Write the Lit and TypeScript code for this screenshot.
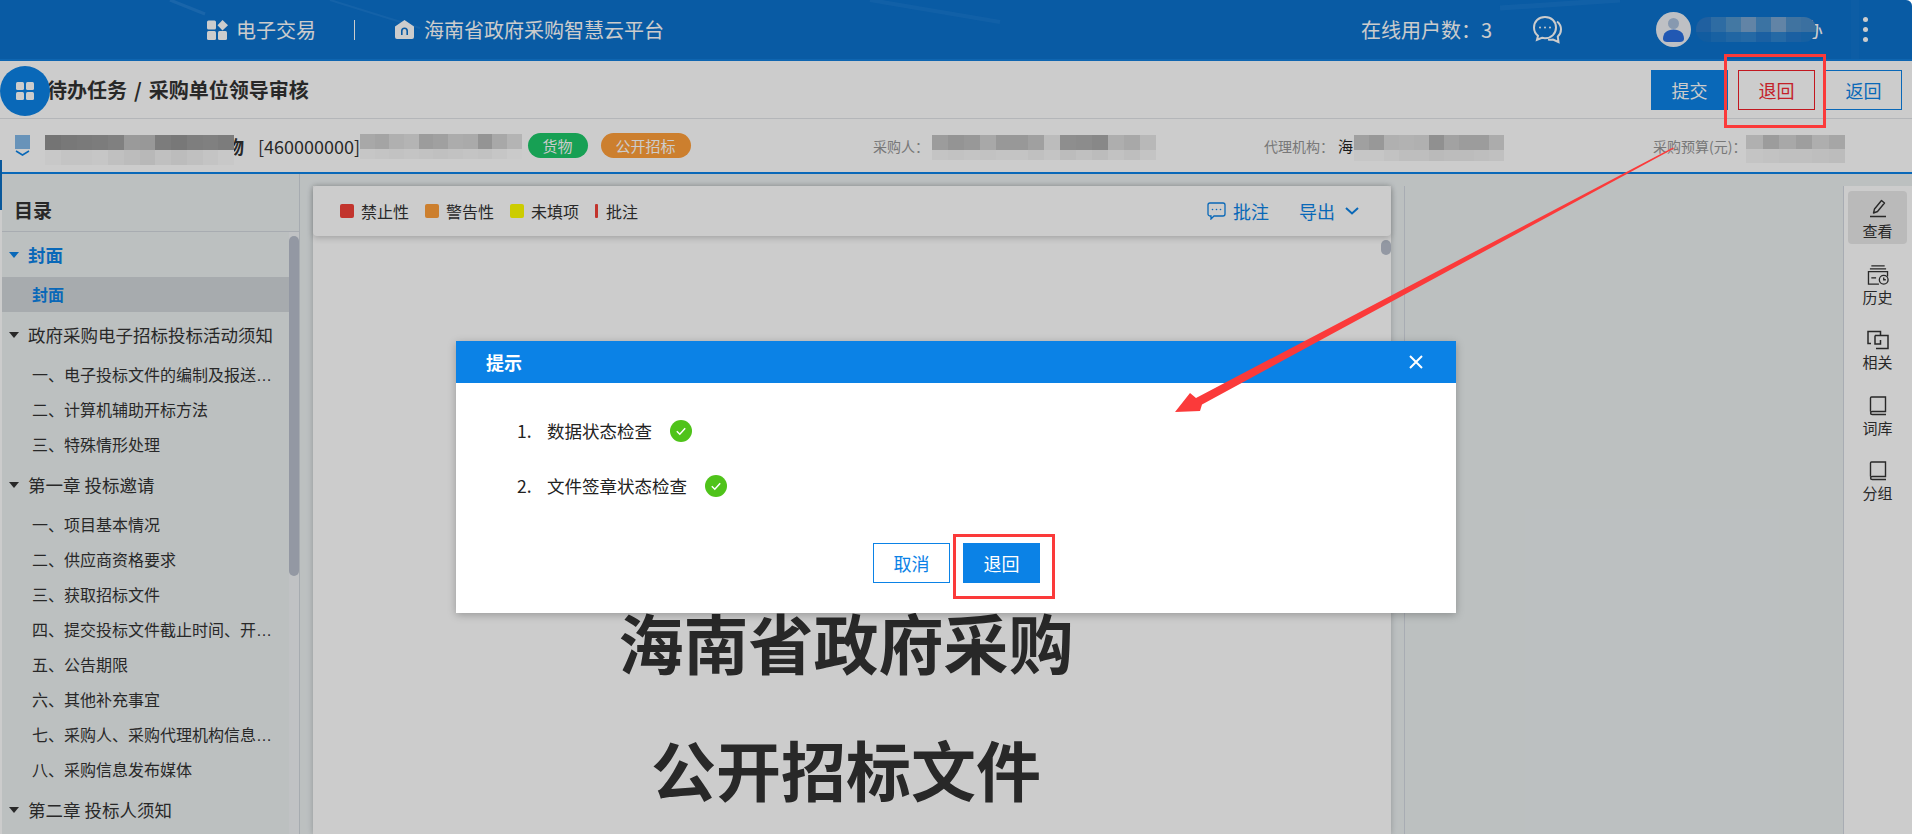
import { LitElement, html, css, svg } from "lit";
import { customElement } from "lit/decorators.js";

const mosaic = (w: number, top: number[], bottom: number[], h = 15, hb = 15) => html`<span class="mosaic">
  <span class="mrow">${top.map((g) => cell(w, h, g))}</span>
  <span class="mrow">${bottom.map((g) => cell(w, hb, g))}</span>
</span>`;
const cell = (w: number, h: number, g: number) => {
  const v = Math.min(255, Math.round(g / 0.8));
  return html`<i style="width:${w}px;height:${h}px;background:rgb(${v},${v},${v})"></i>`;
};
const blueMosaic = (w: number, list: string[], h: number) =>
  html`<span class="mrow">${list.map((c) => html`<i style="width:${w}px;height:${h}px;background:${c}"></i>`)}</span>`;

type Sec = { t: string; kids: string[]; active?: boolean };
const SECTIONS: Sec[] = [
  { t: "封面", active: true, kids: ["封面"] },
  { t: "政府采购电子招标投标活动须知", kids: ["一、电子投标文件的编制及报送要求和说明", "二、计算机辅助开标方法", "三、特殊情形处理"] },
  {
    t: "第一章 投标邀请",
    kids: [
      "一、项目基本情况",
      "二、供应商资格要求",
      "三、获取招标文件",
      "四、提交投标文件截止时间、开标时间和地点",
      "五、公告期限",
      "六、其他补充事宜",
      "七、采购人、采购代理机构信息及联系方式",
      "八、采购信息发布媒体",
    ],
  },
  { t: "第二章 投标人须知", kids: [] },
];

const ICON_PEN = svg`<svg class="ri" viewBox="0 0 20 20" width="20" height="20" fill="none" stroke="#333" stroke-width="1.4"><path d="M5.5 14 6.500 10 13.500 1.500 16.500 4 9.500 12.500z" stroke-linejoin="round"/><path d="M2 17.500h16" stroke-width="1.6"/></svg>`;
const ICON_HIST = svg`<svg class="ri" viewBox="0 0 24 21" width="24" height="21" fill="none" stroke="#333" stroke-width="1.4"><path d="M5 1h14M3.500 4h17"/><path d="M13 20H2V7h20v5"/><path d="M5 13.500h5"/><circle cx="18" cy="15.500" r="4.600" fill="#fff"/><path d="M18 13v2.500h2.200"/></svg>`;
const ICON_COPY = svg`<svg class="ri" viewBox="0 0 24 20" width="24" height="20" fill="none" stroke="#333" stroke-width="1.5"><path d="M5 13.500H2V1.500h12.500v4"/><path d="M9 5.500h13v13H10"/><path d="M9 5.500V14h5.500V10"/></svg>`;
const ICON_BOOK = svg`<svg class="ri" viewBox="0 0 20 20" width="20" height="20" fill="none" stroke="#333" stroke-width="1.4"><path d="M2.500 15.500V2c0-.6.4-1 1-1h14v14.500H4.300c-2.300 0-2.300 3 0 3H18"/></svg>`;

@customElement("app-root")
export class AppRoot extends LitElement {
  static styles = css`
    :host {
      display: block;
      height: 100vh;
      overflow: hidden;
      position: relative;
      background: #fff;
      font-family: "Noto Sans CJK SC", "Noto Sans", sans-serif;
      color: #333;
    }
    .page {
      width: 1912px;
      height: 834px;
      position: relative;
      overflow: hidden;
      display: flex;
      flex-direction: column;
      background: #fff;
      border-top-right-radius: 6px;
    }
    .top {
      height: 59px;
      flex: none;
      border-bottom: 2px solid #127fdc;
      background: #0c72ce;
      display: flex;
      align-items: center;
      padding-left: 207px;
      color: #fff;
      font-size: 20px;
      position: relative;
      overflow: hidden;
    }
    .streaks { position: absolute; left: 0; top: 0; }
    .top > *:not(.streaks) { position: relative; }
    .top-a { display: flex; align-items: center; gap: 9px; }
    .top-a.first { gap: 8px; }
    .vsep { width: 1px; height: 20px; background: #fff; margin: 0 39px 0 38px; }
    .online { margin-left: 697px; width: 131px; white-space: nowrap; }
    .chat { margin-left: 40px; display: block; }
    .avatar { margin-left: 93px; display: block; }
    .user { margin-left: 5px; display: flex; align-items: center; }
    .umos { display: flex; flex-direction: column; position: relative; z-index: 1; border-radius: 12px; overflow: hidden; }
    .ulast { margin-left: -13px; font-size: 20px; width: 20px; }
    .kebab { margin-left: 40px; display: flex; flex-direction: column; gap: 5px; }
    .kebab i { width: 5px; height: 5px; border-radius: 50%; background: #fff; display: block; }

    .bar {
      height: 57px;
      flex: none;
      border-bottom: 1px solid #e2e4e8;
      display: flex;
      align-items: center;
      justify-content: space-between;
      padding: 0 10px 0 47px;
    }
    .crumb { font-size: 20px; font-weight: 700; color: #333; word-spacing: 2.5px; }
    .btns { display: flex; gap: 10px; margin-top: 1px; }
    .btn {
      width: 77px;
      height: 40px;
      box-sizing: border-box;
      border: 1px solid #0c83e6;
      display: flex;
      align-items: center;
      justify-content: center;
      font-size: 18px;
      color: #0c83e6;
      background: #fff;
    }
    .btn.solid { background: #0c83e6; color: #fff; }
    .btn.danger { border-color: #f31d27; color: #f52a33; }

    .info {
      height: 53px;
      flex: none;
      margin-left: 2px;
      border-bottom: 2px solid #0c83e6;
      display: flex;
      align-items: center;
    }
    .info-l { width: 871px; display: flex; align-items: center; padding-left: 13px; box-sizing: border-box; }
    .mosaic { display: inline-flex; flex-direction: column; flex: none; }
    .mrow { display: flex; }
    .mrow i { display: block; flex: none; }
    .mname { margin-left: 15px; margin-top: 5px; position: relative; z-index: 1; }
    .strong { font-size: 18px; font-weight: 700; margin-left: -8px; }
    .code { font-size: 18px; margin-left: 14px; width: 102px; white-space: nowrap; }
    .mcode { margin-top: -3px; }
    .tag {
      height: 25px;
      border-radius: 13px;
      font-size: 15px;
      color: #fff;
      display: flex;
      align-items: center;
      justify-content: center;
      flex: none;
      margin-top: -1px;
    }
    .tag.g { width: 60px; background: #1dc86a; margin-left: 6px; }
    .tag.o { width: 90px; background: #ff9f3a; margin-left: 13px; }
    .meta { display: flex; align-items: center; font-size: 14px; color: #969696; }
    .meta b { font-weight: 400; color: #222; }
    .meta .mosaic { margin-top: 3px; }
    .buyer { width: 391px; }
    .buyer .mosaic { margin-left: 3px; }
    .agency { width: 389px; }
    .agency .mosaic { margin-top: 4px; margin-left: 1px; }
    .agency b { margin-left: 4px; font-size: 15px; }
    .budget .mosaic { margin-top: 6px; }

    .body { flex: 1; min-height: 0; display: flex; background: #ebf0f1; margin-left: 2px; }
    .side { width: 297px; flex: none; border-right: 1px solid #d0d6dd; display: flex; flex-direction: column; }
    .side-h {
      height: 58px;
      flex: none;
      box-sizing: border-box;
      border-bottom: 1px solid #d3d8de;
      padding: 23px 0 0 12px;
      font-size: 19px;
      line-height: 26px;
      font-weight: 700;
      color: #333;
    }
    .side-b { flex: 1; min-height: 0; display: flex; }
    .toc { flex: 1; min-width: 0; }
    .chap { height: 45px; display: flex; align-items: center; gap: 9px; padding-left: 7px; font-size: 17.5px; color: #333; white-space: nowrap; }
    .chap.on { color: #0c83e6; font-weight: 700; }
    .tri { width: 0; height: 0; border-left: 5px solid transparent; border-right: 5px solid transparent; border-top: 6px solid #333; flex: none; }
    .on .tri { border-top-color: #0c83e6; }
    .kid {
      height: 35px;
      line-height: 38px;
      padding-left: 30px;
      width: 271px;
      box-sizing: border-box;
      font-family: "Liberation Sans", "Noto Sans CJK SC", sans-serif;
      font-size: 16px;
      color: #333;
      white-space: nowrap;
      overflow: hidden;
      text-overflow: ellipsis;
    }
    .kid.sel { background: #d1d6da; color: #0c83e6; font-weight: 700; width: auto; }
    .track { width: 10px; flex: none; background: #f0f3f5; }
    .thumb { width: 10px; height: 340px; margin-top: 4px; background: #b8bfcc; border-radius: 5px; }

    .center { width: 1105px; flex: none; display: flex; box-sizing: border-box; padding: 12px 0 0 13px; }
    .center-in { flex: 1; min-width: 0; display: flex; flex-direction: column; }
    .docwrap { width: 1078px; flex: 1; min-height: 0; display: flex; flex-direction: column; box-shadow: 0 0 6px rgba(0, 0, 0, 0.22); background: #fff; }
    .tools {
      height: 50px;
      flex: none;
      display: flex;
      align-items: center;
      padding: 0 32px 0 27px;
      border-radius: 4px;
      background: #fff;
      box-shadow: 0 2px 6px rgba(0, 0, 0, 0.2);
      font-size: 16px;
      color: #333;
      position: relative;
    }
    .lg { display: flex; align-items: center; gap: 7px; margin-right: 16px; }
    .lg i { width: 14px; height: 14px; border-radius: 2px; display: block; }
    .lg i.thin { width: 3px; border-radius: 1px; margin-right: 1px; }
    .tools-r { margin-left: auto; display: flex; align-items: center; color: #0c83e6; font-size: 18px; }
    .tools-r svg { display: block; flex: none; }
    .tx1 { margin: 0 30px 0 7px; }
    .chev { margin-left: 10px; }
    .paper { flex: 1; min-height: 0; display: flex; background: #fff; }
    .sheet { flex: 1; text-align: center; padding: 342px 2px 0 0; font-size: 65px; line-height: 127px; font-weight: 700; color: #333; }
    .ptrack { width: 10px; flex: none; }
    .pthumb { width: 10px; height: 15px; margin-top: 4px; border-radius: 5px; background: #b8bfcc; }
    .centerline { width: 1px; flex: none; background: #d3d8e0; margin-left: 13px; }
    .spare { flex: 1; }
    .rail { width: 69px; flex: none; margin-top: 12px; background: #fff; border-left: 1px solid #d3d8e0; padding: 5px 0 0 4px; box-sizing: border-box; }
    .ritem { width: 59px; height: 53px; margin-bottom: 12.5px; box-sizing: border-box; padding-top: 8px; border-radius: 4px; display: flex; flex-direction: column; align-items: center; font-size: 15px; line-height: 20px; color: #333; }
    .ritem.on { background: #e9e9e9; }
    .rt { margin-top: 2px; }
    .ri { display: block; height: 20px; flex: none; }

    .fab {
      position: absolute;
      left: 0;
      top: 66px;
      width: 50px;
      height: 50px;
      border-radius: 50%;
      background: #0c83e6;
      display: flex;
      align-items: center;
      justify-content: center;
      z-index: 2;
    }
    .edge { position: absolute; left: 0; top: 160px; width: 2px; height: 50px; background: #0c6ec2; z-index: 2; }
    .mask { position: absolute; inset: 0; background: rgba(0, 0, 0, 0.2); z-index: 5; }
    .modal {
      position: absolute;
      left: 456px;
      top: 341px;
      width: 1000px;
      height: 272px;
      background: #fff;
      box-shadow: 0 2px 8px rgba(0, 0, 0, 0.25);
      display: flex;
      flex-direction: column;
      z-index: 6;
    }
    .m-h {
      height: 42px;
      flex: none;
      background: #0b82e6;
      color: #fff;
      display: flex;
      align-items: center;
      justify-content: space-between;
      padding: 0 33px 0 30px;
      font-size: 18px;
      font-weight: 700;
    }
    .m-b { padding: 20px 0 0 61px; flex: 1; font-size: 17.5px; color: #222; }
    .li { height: 55px; display: flex; align-items: center; }
    .li .n { width: 30px; }
    .ok { margin-left: 18px; display: block; }
    .m-f { display: flex; justify-content: center; gap: 13px; padding: 0 0 30px 1px; }
    .mbtn { width: 77px; height: 40px; box-sizing: border-box; border: 1px solid #0b82e6; display: flex; align-items: center; justify-content: center; font-size: 18px; color: #0b82e6; background: #fff; }
    .mbtn.solid { background: #0b82e6; color: #fff; }

    .anno { position: absolute; left: 0; top: 0; pointer-events: none; z-index: 7; }
  `;

  render() {
    return html`
      <div class="page">
        <div class="top">
          <svg class="streaks" width="1912" height="59" fill="none" stroke="#4f9fe6" stroke-opacity=".3">
            <path d="M170 0 205 14" stroke-width="3" />
            <path d="M330 0 420 28" stroke-width="2" stroke-opacity=".2" />
            <path d="M870 0 1000 22" stroke-width="4" stroke-opacity=".15" />
            <path d="M1500 8 1620 0" stroke-width="5" stroke-opacity=".15" />
            <path d="M1855 0 1855 59" stroke-width="8" stroke-opacity=".08" />
          </svg>
          <span class="top-a first">
            <svg width="21" height="20" viewBox="0 0 21 20" fill="#fff">
              <rect x="0" y="0.500" width="9" height="9" rx="1.500" />
              <path d="M15.500 0 21 5.200 15.500 10.400 10.500 5.200z" />
              <rect x="0" y="11" width="9" height="9" rx="1.500" />
              <rect x="11" y="11" width="9" height="9" rx="1.500" />
            </svg>
            电子交易
          </span>
          <span class="vsep"></span>
          <span class="top-a">
            <svg width="21" height="21" viewBox="0 0 21 21" fill="#fff">
              <path fill-rule="evenodd" d="M10.500 1 20 7.500V18a2 2 0 0 1-2 2H3a2 2 0 0 1-2-2V7.500zM7 16h1.600v-4a1.900 1.900 0 0 1 3.800 0v4H14v-4a3.500 3.500 0 0 0-7 0z" />
            </svg>
            海南省政府采购智慧云平台
          </span>
          <span class="online">在线用户数：3</span>
          <svg class="chat" width="31" height="30" viewBox="0 0 31 30" fill="none" stroke="#fff" stroke-width="2">
            <path d="M13 2C6.500 2 2 6.500 2 12.500c0 3.500 1.500 6.300 4 8.300l-1 4 5-2c1 .3 2 .4 3 .4 6.500 0 11-4.700 11-10.700S19.500 2 13 2z" />
            <path d="M25 6.500c2.500 2 4 4.500 4 7.800 0 3-1.200 5.500-3.200 7.300l.7 5.400-5.500-2.500c-1.300.3-3 .3-5 0" />
            <circle cx="8" cy="12.500" r="1" fill="#fff" stroke="none" />
            <circle cx="13" cy="12.500" r="1" fill="#fff" stroke="none" />
            <circle cx="18" cy="12.500" r="1" fill="#fff" stroke="none" />
          </svg>
          <svg class="avatar" width="35" height="35" viewBox="0 0 35 35">
            <circle cx="17.500" cy="17.500" r="17.500" fill="#eef1f6" />
            <circle cx="17.500" cy="11.500" r="5.500" fill="#a9c0dc" />
            <path d="M7 27c0-6 4-9.500 10.500-9.500S28 21 28 27c0 2-2 3-4 3H11c-2 0-4-1-4-3z" fill="#2a6fe0" />
          </svg>
          <span class="user">
            <span class="umos">
              ${blueMosaic(15, ["#2878c8", "#3a88cc", "#5496cc", "#7ba6d0", "#4a90cc", "#7ba6d0", "#5090c8", "#4a8cc8"], 15)}
              ${blueMosaic(15, ["#1674c8", "#1f7acb", "#2a80cc", "#2f84cf", "#2279cb", "#2f84cf", "#2279cb", "#1c78ca"], 10)}
            </span>
            <span class="ulast">办</span>
          </span>
          <span class="kebab"><i></i><i></i><i></i></span>
        </div>

        <div class="bar">
          <div class="crumb">待办任务 / 采购单位领导审核</div>
          <div class="btns">
            <div class="btn solid">提交</div>
            <div class="btn danger">退回</div>
            <div class="btn">返回</div>
          </div>
        </div>

        <div class="info">
          <div class="info-l">
            <svg width="15" height="21" viewBox="0 0 15 21"><path d="M0 0h15v14H0z" fill="#82b8e8" /><path d="M1 16l6.500 4L14 16" fill="none" stroke="#0c83e6" stroke-width="1.500" /></svg>
            <span class="mname">${mosaic(15.75, [0x75, 0x78, 0x7a, 0x7c, 0x80, 0x9a, 0x98, 0x7d, 0x78, 0x7e, 0x80, 0x7c], [0xc8, 0xc4, 0xc4, 0xc6, 0xc0, 0xbc, 0xb8, 0xc0, 0xbc, 0xc0, 0xc4, 0xc8])}</span>
            <span class="strong">物</span>
            <span class="code">[460000000]</span>
            <span class="mcode">${mosaic(14.7, [0xa8, 0xa4, 0xb0, 0xb4, 0x9c, 0xa0, 0xac, 0xaa, 0x94, 0xa8, 0xb4], [0xc6, 0xc4, 0xc2, 0xc4, 0xc2, 0xc0, 0xc2, 0xc4, 0xc2, 0xc6, 0xca], 15, 10)}</span>
            <span class="tag g">货物</span>
            <span class="tag o">公开招标</span>
          </div>
          <div class="meta buyer">采购人：${mosaic(16, [0x9c, 0x94, 0x98, 0xa8, 0x98, 0x98, 0xa0, 0xbc, 0x8e, 0x8c, 0x88, 0xae, 0xa8, 0xb8], [0xc4, 0xc2, 0xc4, 0xc2, 0xc4, 0xc4, 0xc0, 0xc4, 0xbc, 0xc0, 0xbc, 0xc2, 0xbe, 0xc4], 15, 10)}</div>
          <div class="meta agency">代理机构：<b>海</b>${mosaic(15, [0xa0, 0x98, 0xb0, 0xb2, 0xb0, 0x90, 0xa2, 0x9c, 0x9c, 0xac], [0xc6, 0xc6, 0xc2, 0xbe, 0xbe, 0xba, 0xbc, 0xbc, 0xbe, 0xc0], 15, 11)}</div>
          <div class="meta budget">采购预算(元)：${mosaic(16.5, [0xb0, 0x9c, 0xa8, 0x9e, 0xae, 0xa6], [0xc4, 0xc2, 0xc0, 0xc0, 0xbe, 0xbc], 14, 14)}</div>
        </div>

        <div class="body">
          <aside class="side">
            <div class="side-h">目录</div>
            <div class="side-b">
              <div class="toc">
                ${SECTIONS.map(
                  (s) => html`
                    <div class="chap ${s.active ? "on" : ""}"><span class="tri"></span>${s.t}</div>
                    ${s.kids.map((k) => html`<div class="kid ${s.active ? "sel" : ""}">${k}</div>`)}
                  `
                )}
              </div>
              <div class="track"><div class="thumb"></div></div>
            </div>
          </aside>
          <section class="center">
            <div class="center-in">
              <div class="docwrap">
                <div class="tools">
                  <span class="lg"><i style="background:#f34139"></i>禁止性</span>
                  <span class="lg"><i style="background:#ff9f3a"></i>警告性</span>
                  <span class="lg"><i style="background:#ffff00"></i>未填项</span>
                  <span class="lg"><i class="thin" style="background:#f34139"></i>批注</span>
                  <span class="tools-r">
                    <svg width="19" height="18" viewBox="0 0 19 18" fill="none" stroke="#0c83e6" stroke-width="1.300"><path d="M3 1h13a2 2 0 0 1 2 2v9a2 2 0 0 1-2 2H7l-3 3v-3H3a2 2 0 0 1-2-2V3a2 2 0 0 1 2-2z" /><circle cx="5.500" cy="7.500" r=".8" fill="#0c83e6" stroke="none" /><circle cx="9.500" cy="7.500" r=".8" fill="#0c83e6" stroke="none" /><circle cx="13.500" cy="7.500" r=".8" fill="#0c83e6" stroke="none" /></svg>
                    <span class="tx1">批注</span>
                    <span>导出</span>
                    <svg class="chev" width="14" height="8" viewBox="0 0 14 8" fill="none" stroke="#0c83e6" stroke-width="2"><path d="M1 1l6 5.500L13 1" /></svg>
                  </span>
                </div>
                <div class="paper">
                  <div class="sheet">海南省政府采购<br />公开招标文件</div>
                  <div class="ptrack"><div class="pthumb"></div></div>
                </div>
              </div>
            </div>
            <div class="centerline"></div>
          </section>
          <div class="spare"></div>
          <nav class="rail">
            <div class="ritem on">${ICON_PEN}<span class="rt">查看</span></div>
            <div class="ritem">${ICON_HIST}<span class="rt">历史</span></div>
            <div class="ritem">${ICON_COPY}<span class="rt">相关</span></div>
            <div class="ritem">${ICON_BOOK}<span class="rt">词库</span></div>
            <div class="ritem">${ICON_BOOK}<span class="rt">分组</span></div>
          </nav>
        </div>

        <div class="fab">
          <svg width="18" height="18" viewBox="0 0 18 18" fill="#fff"><rect width="8" height="8" rx="1.500" /><rect x="10" width="8" height="8" rx="1.500" /><rect y="10" width="8" height="8" rx="1.500" /><rect x="10" y="10" width="8" height="8" rx="1.500" /></svg>
        </div>
        <div class="edge"></div>
        <div class="mask"></div>

        <div class="modal">
          <div class="m-h">
            <span>提示</span>
            <svg width="14" height="14" viewBox="0 0 14 14" stroke="#fff" stroke-width="2"><path d="M1 1l12 12M13 1 1 13" /></svg>
          </div>
          <div class="m-b">
            <div class="li"><span class="n">1.</span>数据状态检查${this.ok()}</div>
            <div class="li"><span class="n">2.</span>文件签章状态检查${this.ok()}</div>
          </div>
          <div class="m-f">
            <div class="mbtn">取消</div>
            <div class="mbtn solid">退回</div>
          </div>
        </div>

        <svg class="anno" width="1912" height="834" fill="none">
          <rect x="1725.500" y="55.500" width="99" height="71" stroke="#fb3a3a" stroke-width="3" />
          <rect x="954.500" y="535.500" width="99" height="62" stroke="#fb3a3a" stroke-width="3" />
          <path d="M1673 147.500 1674 148.500 1202 404.500 1200 411 1175 412 1190 393 1196 398z" fill="#fb3a3a" />
        </svg>
      </div>
    `;
  }

  ok() {
    return html`<svg class="ok" width="22" height="22" viewBox="0 0 22 22"><circle cx="11" cy="11" r="11" fill="#4fc31a" /><path d="M6.800 11.200l3 3 5.400-6" fill="none" stroke="#fff" stroke-width="1.500" /></svg>`;
  }
}
